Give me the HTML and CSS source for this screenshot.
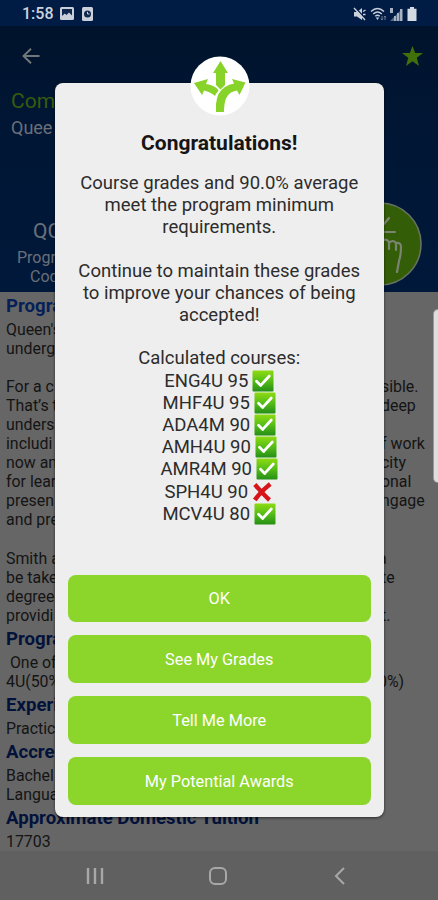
FILE: index.html
```html
<!DOCTYPE html>
<html lang="en">

<head>
    <meta charset="UTF-8">
    <meta name="viewport" content="width=device-width, initial-scale=1.0">
    <title>Program</title>
    <link rel="stylesheet" href="styles.css">
</head>

<body>
    <!-- shared icons -->
    <svg class="defs" width="0" height="0">
        <defs>
            <linearGradient id="green" x1="0" y1="0" x2="0" y2="1">
                <stop offset="0" stop-color="#8edb12" />
                <stop offset="0.5" stop-color="#55bd16" />
                <stop offset="1" stop-color="#258f17" />
            </linearGradient>
            <symbol id="check" viewBox="0 0 22 22">
                <rect x="0.5" y="0.5" width="21" height="21" rx="1" fill="url(#green)" />
                <path d="M4.500 11.300l4.200 4.100L17.300 6" fill="none" stroke="#fff" stroke-width="2.8" stroke-linecap="round" stroke-linejoin="round" />
            </symbol>
            <symbol id="cross" viewBox="0 0 22 22">
                <path d="M2.8 3.500C7 8 12 14 17.500 19M18.200 3C12 8 7 13 2.800 19" fill="none" stroke="#d6141a" stroke-width="4.400" />
            </symbol>
        </defs>
    </svg>

    <div class="screen">
        <header>
            <div class="status">
                <span class="time">1:58</span>
                <svg class="photo" width="14" height="13" viewBox="0 0 14 13">
                    <rect width="14" height="13" rx="1.5" fill="#c9d0da" />
                    <path d="M2 2h10v6.5L9 5.5 6.5 8 4.8 6.5 2 9z" fill="#10284d" />
                    <path d="M2 10l3-2 1.6 1.2L9 7l3 3.5" fill="none" stroke="#c9d0da" />
                </svg>
                <svg class="clock" width="11" height="14" viewBox="0 0 11 14">
                    <rect width="11" height="14" rx="1.5" fill="#c9d0da" />
                    <circle cx="5.5" cy="7" r="3.5" fill="#10284d" />
                    <path d="M5.5 4.8V7h2" fill="none" stroke="#c9d0da" />
                </svg>
                <div class="signals">
                    <svg width="13" height="14" viewBox="0 0 13 14">
                        <path d="M1 5h3l5-4v12L4 9.500H1z" fill="#c9d0da" />
                        <path d="M2.200 .5l10 11" stroke="#011c44" stroke-width="1.500" />
                        <path d="M1 1l11 12M10 4.500l2.500-1.500M10 7.500h2.500" stroke="#c9d0da" stroke-width="1.400" />
                    </svg>
                    <svg width="17" height="14" viewBox="0 0 17 14">
                        <path d="M1 4.5q6.5-6 13 0M3.2 7q4.3-4 8.6 0M5.3 9.3q2.2-2 4.4 0" fill="none" stroke="#c9d0da" stroke-width="1.5" />
                        <path d="M7.5 13L5.8 10.6h3.4z" fill="#c9d0da" />
                        <path d="M12 9v4M11 11.7l1 1.3 1-1.3M15 13V9M14 10.3L15 9l1 1.3" fill="none" stroke="#6d7e98" />
                    </svg>
                    <svg width="14" height="14" viewBox="0 0 14 14">
                        <path d="M1 1h3v5H1zM5 9h2v5H5zM8 6h2v8H8zM11 2h2.5v12H11z" fill="#a6b1c1" />
                        <path d="M1 14l12-12v12z" fill="#a6b1c1" opacity="0.5" />
                    </svg>
                    <svg width="10" height="14" viewBox="0 0 10 14">
                        <path d="M3 0h4v1.8h2.5V14H.5V1.8H3z" fill="#d4dae2" />
                    </svg>
                </div>
            </div>
            <div class="toolbar">
                <svg width="18" height="16" viewBox="0 0 18 16">
                    <path d="M17.5 8H1.5M9 .8L1.5 8 9 15.2" fill="none" stroke="#70787a" stroke-width="1.9" />
                </svg>
                <svg width="21" height="20" viewBox="0 0 21 20">
                    <path d="M10.5 0l2.7 7H21l-6.2 4.8L17 20l-6.5-4.8L4 20l2.2-8.2L0 7h7.8z" fill="#41700b" />
                </svg>
            </div>
            <h1>Com</h1>
            <p class="school">Quee</p>
            <div class="summary">
                <div class="facts">
                    <p class="code">QC</p>
                    <p>Progr</p>
                    <p class="coop">Cod</p>
                </div>
                <svg class="tap" width="84" height="84" viewBox="0 0 84 84">
                    <circle cx="42" cy="42" r="41" fill="#345d07" stroke="#66725f" stroke-width="1.6" />
                    <path d="M46 22l5-6M47 30h10M35 20v-7M44 41v-2q4-3 7 1v7M51 41q4-4 7 0v7M58 41q5-1 5 4 0 8-2 14l-2 11" fill="none" stroke="#7b8470" stroke-width="2.2" stroke-linecap="round" />
                </svg>
            </div>
        </header>

        <main>
            <h2 class="first">Progra</h2>
            <div class="text">
                <span>Queen's</span><span></span>
                <span>underg</span><span></span>
                <span>&nbsp;</span><span></span>
                <span>For a c</span><span>sible.</span>
                <span>That’s t</span><span>deep</span>
                <span>unders</span><span></span>
                <span>includi</span><span>f work</span>
                <span>now an</span><span>city</span>
                <span>for lear</span><span>onal</span>
                <span>presen</span><span>ngage</span>
                <span>and pre</span><span></span>
                <span>&nbsp;</span><span></span>
                <span>Smith a</span><span class="tail">a</span>
                <span>be take</span><span>te</span>
                <span>degree</span><span></span>
                <span>providi</span><span>t.</span>
            </div>
            <h2>Progra</h2>
            <div class="text">
                <span>&nbsp;One of</span><span></span>
                <span>4U(50%</span><span class="tail">0%)</span>
            </div>
            <h2>Experi</h2>
            <div class="text"><span>Practic</span></div>
            <h2>Accre</h2>
            <div class="text">
                <span>Bachel</span><span></span>
                <span>Langua</span><span></span>
            </div>
            <h2>Approximate Domestic Tuition</h2>
            <div class="text"><span>17703</span></div>
        </main>

        <nav>
            <svg width="18" height="18" viewBox="0 0 18 18">
                <path d="M2 1v16M9 1v16M16 1v16" stroke="#a8a8a8" stroke-width="2.4" />
            </svg>
            <svg width="18" height="18" viewBox="0 0 18 18">
                <rect x="1" y="1" width="16" height="16" rx="5" fill="none" stroke="#a8a8a8" stroke-width="2" />
            </svg>
            <svg width="18" height="18" viewBox="0 0 18 18">
                <path d="M13 1L5 9l8 8" fill="none" stroke="#a8a8a8" stroke-width="2" />
            </svg>
        </nav>

        <div class="edge"></div>

        <div class="dialog">
            <svg class="logo" width="60" height="60" viewBox="0 0 60 60">
                <circle cx="30" cy="30" r="29.5" fill="#fff" />
                <g fill="#88d32a">
                    <path d="M30.500 5l7.500 12h-3v12l-4.500 4.500L26 29V17h-3z" />
                    <path d="M4 27l14-4-2 5q8 1 12.500 6l-.5 1.500q-2 2-3 4.500-4-4-11-5.500L12 39z" />
                    <path d="M26 56V48q1-12 9-17 4-3 9-3.500L42 23l13.500 3.500L49.500 39l-2.500-4.500q-8 1-11 8-2 5-2 13.500z" />
                </g>
            </svg>
            <h3>Congratulations!</h3>
            <div class="message">
                <p>Course grades and 90.0% average<br>meet the program minimum<br>requirements.</p>
                <p>Continue to maintain these grades<br>to improve your chances of being<br>accepted!</p>
            </div>
            <ul>
                <li>Calculated courses:</li>
                <li>ENG4U 95 <svg><use href="#check" /></svg></li>
                <li>MHF4U 95 <svg><use href="#check" /></svg></li>
                <li>ADA4M 90 <svg><use href="#check" /></svg></li>
                <li>AMH4U 90 <svg><use href="#check" /></svg></li>
                <li>AMR4M 90 <svg><use href="#check" /></svg></li>
                <li>SPH4U 90 <svg><use href="#cross" /></svg></li>
                <li>MCV4U 80 <svg><use href="#check" /></svg></li>
            </ul>
            <div class="buttons">
                <button>OK</button>
                <button>See My Grades</button>
                <button>Tell Me More</button>
                <button>My Potential Awards</button>
            </div>
        </div>
    </div>
</body>

</html>
```
FILE: styles.css
```css
* {
    margin: 0;
    padding: 0;
    box-sizing: border-box;
}

body {
    font-family: Roboto, "Liberation Sans", sans-serif;
    background-color: #666;
}

svg {
    display: block;
    flex: none;
}

.defs {
    position: absolute;
}

.screen {
    position: relative;
    width: 438px;
    height: 900px;
    overflow: hidden;
    display: flex;
    flex-direction: column;
}

header {
    height: 292px;
    flex: none;
    color: #6b7078;
    background: linear-gradient(#00132c 26px, #001634 120px, #00183a);
}

.status {
    height: 26px;
    padding: 1px 21px 0 22px;
    display: flex;
    align-items: center;
    background-color: #011c44;
    color: #cdd3dc;
}

.time {
    width: 38px;
    font-size: 16px;
    font-weight: 500;
    line-height: 26px;
}

.clock {
    margin-left: 8px;
}

.signals {
    margin-left: auto;
    display: flex;
    gap: 4px;
}

.signals svg:nth-child(3) {
    margin-left: -2px;
}

.toolbar {
    height: 60px;
    padding: 0 15px 0 22px;
    display: flex;
    align-items: center;
    justify-content: space-between;
}

h1 {
    padding-left: 11px;
    font-size: 21px;
    font-weight: 400;
    line-height: 30px;
    color: #365c0c;
}

.school {
    padding-left: 11px;
    font-size: 18px;
    line-height: 23px;
}

.summary {
    margin-top: 63px;
    padding-right: 16px;
    display: flex;
    justify-content: space-between;
}

.facts {
    padding: 16px 0 0 17px;
    font-size: 16px;
    line-height: 19px;
}

.code {
    padding-left: 16px;
    margin-bottom: 4px;
    font-size: 21px;
    line-height: 26px;
}

.coop {
    padding-left: 13px;
}

main {
    flex: 1;
    padding-left: 6px;
    overflow: hidden;
}

h2 {
    font-size: 18.6px;
    font-weight: 700;
    line-height: 28px;
    color: #03123a;
}

h2.first {
    color: #071f58;
}

.text {
    display: grid;
    grid-template-columns: 375px 1fr;
    font-size: 15.9px;
    line-height: 19.05px;
    color: #141414;
}

.tail {
    margin-left: -3px;
}

nav {
    height: 49px;
    flex: none;
    padding: 1px 89px 0 86px;
    display: flex;
    align-items: center;
    justify-content: space-between;
    background-color: #606060;
}

.edge {
    position: absolute;
    top: 309px;
    right: 0;
    width: 5px;
    height: 174px;
    border-radius: 5px 0 0 5px;
    background-color: #dedede;
    border: 1px solid #999;
    border-right: 0;
}

.dialog {
    position: absolute;
    top: 83px;
    left: 55px;
    width: 328.5px;
    height: 733.5px;
    padding: 47px 13px 12px;
    display: flex;
    flex-direction: column;
    border-radius: 8px;
    background-color: #eee;
    box-shadow: 0 1px 3px rgba(0, 0, 0, 0.6);
    color: #2c2c2c;
    text-align: center;
}

.logo {
    position: absolute;
    top: -27px;
    left: 135px;
}

h3 {
    font-size: 21px;
    font-weight: 700;
    line-height: 26px;
    color: #151515;
}

.message {
    margin-top: 17px;
    display: flex;
    flex-direction: column;
    gap: 22px;
    font-size: 18.5px;
    line-height: 21.9px;
}

ul {
    margin-top: 21px;
    font-size: 18.5px;
    line-height: 22.2px;
    list-style: none;
}

li {
    height: 22.2px;
    display: flex;
    justify-content: center;
    gap: 4px;
}

li svg {
    width: 22px;
    height: 22px;
}

.buttons {
    margin-top: auto;
    display: flex;
    flex-direction: column;
    gap: 13.2px;
}

button {
    height: 47.6px;
    padding-top: 1px;
    border: 0;
    border-radius: 8px;
    background-color: #8cd52b;
    color: #fff;
    font-family: inherit;
    font-size: 16.3px;
}
```
